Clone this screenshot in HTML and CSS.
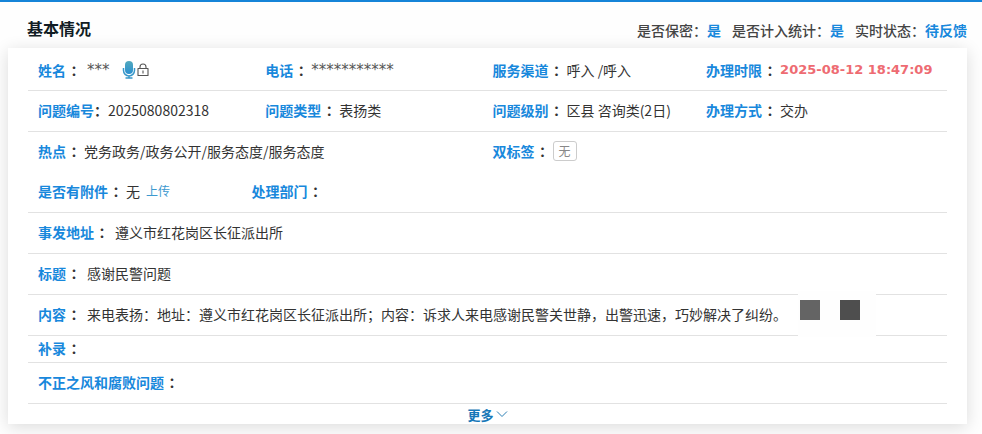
FILE: index.html
```html
<!DOCTYPE html>
<html lang="zh-CN">

<head>
    <meta charset="UTF-8">
    <meta name="viewport" content="width=device-width, initial-scale=1.0">
    <title>基本情况</title>
    <link rel="stylesheet" href="styles.css">
</head>

<body>
    <header class="header">
        <h1 class="title">基本情况</h1>
        <div class="status">
            <span>是否保密：<b>是</b></span>
            <span>是否计入统计：<b>是</b></span>
            <span>实时状态：<b>待反馈</b></span>
        </div>
    </header>

    <main class="card">
        <div class="row">
            <div class="item wide">
                <span class="label">姓名</span><span class="colon">：</span>
                <span class="value stars">***</span>
                <svg class="mic" width="14" height="18" viewBox="0 0 14 18">
                    <defs>
                        <linearGradient id="micFill" x1="0" y1="0" x2="0" y2="1">
                            <stop offset="0" stop-color="#52a9bd" />
                            <stop offset="1" stop-color="#2a8fd0" />
                        </linearGradient>
                    </defs>
                    <rect x="3" y="0" width="8" height="13" rx="4" fill="url(#micFill)" />
                    <path d="M1.500 7v2.500a5.500 5.500 0 0 0 11 0V7M7 15v2M3.500 17h7" fill="none" stroke="#3797c9" stroke-width="1.500" />
                </svg>
                <svg class="lock" width="12" height="14" viewBox="0 0 12 14">
                    <path d="M1 5.500h10v7H1zM3 5.500V4a3 3 0 0 1 6 0v1.500M6 7.500v3" fill="none" stroke="#555" stroke-width="1.100" stroke-linejoin="round" />
                </svg>
            </div>
            <div class="item">
                <span class="label">电话</span><span class="colon">：</span>
                <span class="value stars">***********</span>
            </div>
            <div class="item">
                <span class="label">服务渠道</span><span class="colon">：</span>
                <span class="value">呼入 /呼入</span>
            </div>
            <div class="item">
                <span class="label">办理时限</span><span class="colon">：</span>
                <span class="value deadline">2025-08-12 18:47:09</span>
            </div>
        </div>

        <div class="row">
            <div class="item">
                <span class="label">问题编号</span><span class="colon left">：</span>
                <span class="value">2025080802318</span>
            </div>
            <div class="item">
                <span class="label">问题类型</span><span class="colon">：</span>
                <span class="value">表扬类</span>
            </div>
            <div class="item">
                <span class="label">问题级别</span><span class="colon">：</span>
                <span class="value">区县 咨询类(2日)</span>
            </div>
            <div class="item">
                <span class="label">办理方式</span><span class="colon">：</span>
                <span class="value">交办</span>
            </div>
        </div>

        <div class="row half no-line">
            <div class="item">
                <span class="label">热点</span><span class="colon">：</span>
                <span class="value">党务政务/政务公开/服务态度/服务态度</span>
            </div>
            <div class="item">
                <span class="label">双标签</span><span class="colon">：</span>
                <span class="tag">无</span>
            </div>
        </div>

        <div class="row files">
            <div class="item">
                <span class="label">是否有附件</span><span class="colon">：</span>
                <span class="value">无</span>
                <a class="upload" href="#">上传</a>
            </div>
            <div class="item">
                <span class="label">处理部门</span><span class="colon">：</span>
            </div>
        </div>

        <div class="row full">
            <div class="item wide">
                <span class="label">事发地址</span><span class="colon">：</span>
                <span class="value">遵义市红花岗区长征派出所</span>
            </div>
        </div>

        <div class="row full">
            <div class="item wide">
                <span class="label">标题</span><span class="colon">：</span>
                <span class="value">感谢民警问题</span>
            </div>
        </div>

        <div class="row full">
            <div class="item wide">
                <span class="label">内容</span><span class="colon">：</span>
                <span class="value">来电表扬：地址：遵义市红花岗区长征派出所；内容：诉求人来电感谢民警关世静，出警迅速，巧妙解决了纠纷。</span>
                <span class="mask"><i class="block"></i><i class="block dark"></i></span>
            </div>
        </div>

        <div class="row full short">
            <div class="item">
                <span class="label">补录</span><span class="colon">：</span>
            </div>
        </div>

        <div class="row full">
            <div class="item">
                <span class="label">不正之风和腐败问题</span><span class="colon">：</span>
            </div>
        </div>

        <button class="more" type="button">更多
            <svg width="12" height="8" viewBox="0 0 12 8">
                <path d="M1 1.500l5 5 5-5" fill="none" stroke="#2b7fb5" stroke-width="1" />
            </svg>
        </button>
    </main>
</body>

</html>
```

FILE: styles.css
```css
* {
    box-sizing: border-box;
    margin: 0;
    padding: 0;
}

body {
    border-top: 2px solid #1584d8;
    background-color: #fefefe;
    font-family: "Noto Sans CJK SC", sans-serif;
    font-size: 14px;
    line-height: 20px;
    color: #333;
    overflow-x: hidden;
}

.header {
    display: flex;
    justify-content: space-between;
    align-items: flex-end;
    height: 46px;
    padding: 0 15px 8px 27px;
}

.title {
    font-size: 16px;
    line-height: 24px;
    color: #111c24;
}

.status {
    display: flex;
    gap: 11px;
    font-weight: 500;
    color: #444;
}

.status b {
    color: #1888dc;
}

.card {
    margin: 0 15px 10px 8px;
    padding: 2px 20px 0;
    background-color: #fff;
    box-shadow: 0 3px 16px rgba(0, 0, 0, 0.14);
}

/* rows */
.row {
    display: grid;
    grid-template-columns: 50fr 50fr 47fr 53fr;
    align-items: center;
    min-height: 41px;
    padding-left: 10px;
    border-bottom: 1px solid #e2e2e2;
}

.row.half {
    grid-template-columns: 1fr 1fr;
}

.row.files {
    grid-template-columns: 47fr 153fr;
}

.row.full {
    grid-template-columns: 1fr;
}

.row.no-line {
    min-height: 40px;
    border-bottom: none;
}

.row.short {
    min-height: 27px;
}

.item {
    display: flex;
    align-items: center;
    padding-bottom: 2px;
    white-space: nowrap;
}

.row:first-child .item {
    padding-bottom: 0;
}

.label {
    font-weight: bold;
    color: #1888dc;
}

/* the TC face sets the colon in the middle of its box */
.colon {
    font-family: "Noto Sans CJK TC", sans-serif;
    font-weight: bold;
    margin-left: 1px;
    margin-right: 3px;
}

.colon.left {
    font-family: "Noto Sans CJK SC", sans-serif;
    margin: 0;
}

.wide .colon {
    margin-right: 6px;
}

.stars {
    font-family: "DejaVu Sans", sans-serif;
    font-size: 15px;
    color: #555;
}

.deadline {
    font-family: "DejaVu Sans", sans-serif;
    font-size: 13px;
    font-weight: bold;
    color: #ee6b72;
}

.mic {
    margin-left: 12px;
}

.lock {
    margin-left: 1px;
}

.tag {
    padding: 0 5px;
    border: 1px solid #ccc;
    border-radius: 3px;
    font-size: 12px;
    line-height: 18px;
    color: #888;
}

.upload {
    margin-left: 6px;
    font-size: 12px;
    color: #3d99cf;
    text-decoration: none;
}

/* hidden part of the content, lies over the row lines */
.mask {
    position: relative;
    z-index: 1;
    display: flex;
    gap: 20px;
    margin: -12px 0 -12px 11px;
    padding: 9px 16px 17px 2px;
    background-color: #fefefe;
}

.block {
    width: 20px;
    height: 20px;
    background-color: #646464;
}

.block.dark {
    background-color: #4e4e4e;
}

.more {
    display: flex;
    justify-content: center;
    align-items: center;
    gap: 2px;
    width: 100%;
    height: 20px;
    border: none;
    background: none;
    font-family: inherit;
    font-size: 13px;
    font-weight: bold;
    color: #1878b8;
    cursor: pointer;
}
```
